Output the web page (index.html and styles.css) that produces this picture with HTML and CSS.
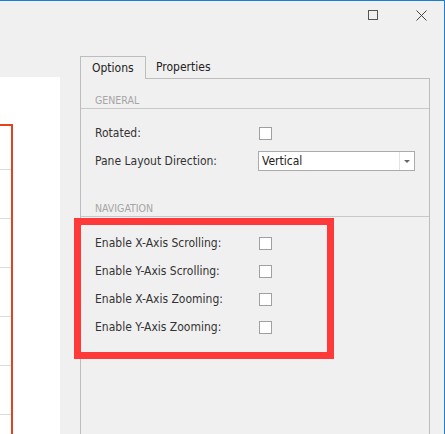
FILE: index.html
```html
<!DOCTYPE html>
<html>
<head>
<meta charset="utf-8">
<link rel="stylesheet" href="styles.css">
</head>
<body>
<div class="window">
  <div class="titlebar">
    <span class="ctl-max"></span>
    <svg class="ctl-close" width="11" height="11" viewBox="0 0 11 11"><path d="M0.5 0.5 L10.5 10.5 M10.5 0.5 L0.5 10.5" stroke="#444" stroke-width="1" fill="none"/></svg>
  </div>
  <div class="main">
    <div class="canvas">
      <div class="frame">
        <div class="cell first"></div>
        <div class="cell"></div>
        <div class="cell"></div>
        <div class="cell"></div>
        <div class="cell"></div>
        <div class="cell"></div>
      </div>
    </div>
    <div class="tabs">
      <div class="tab-strip">
        <div class="tab active">Options</div>
        <div class="tab">Properties</div>
      </div>
      <div class="tab-panel">
        <div class="group-head">General</div>
        <div class="group-body first-group">
          <div class="row"><span class="label">Rotated:</span><span class="check"></span></div>
          <div class="row"><span class="label">Pane Layout Direction:</span>
            <div class="combo"><span class="combo-text">Vertical</span><span class="combo-btn"><span class="arrow"></span></span></div>
          </div>
        </div>
        <div class="group-head">Navigation</div>
        <div class="group-body second-group">
          <div class="row"><span class="label">Enable X-Axis Scrolling:</span><span class="check"></span></div>
          <div class="row"><span class="label">Enable Y-Axis Scrolling:</span><span class="check"></span></div>
          <div class="row"><span class="label">Enable X-Axis Zooming:</span><span class="check"></span></div>
          <div class="row"><span class="label">Enable Y-Axis Zooming:</span><span class="check"></span></div>
        </div>
      </div>
    </div>
  </div>
  <div class="highlight"></div>
</div>
</body>
</html>
```
FILE: styles.css
```css
* { box-sizing: border-box; }
html, body { margin: 0; padding: 0; }
body {
  font-family: "DejaVu Sans Condensed", "Liberation Sans", Arial, sans-serif;
  font-size: 12px;
  color: #333;
  background: #f0f0f0;
}
.window {
  position: relative;
  width: 445px;
  height: 434px;
  background: #f0f0f0;
  border-top: 1px solid #1a7fd4;
  border-right: 1px solid #1a7fd4;
  display: flex;
  flex-direction: column;
  overflow: hidden;
}
.titlebar {
  height: 55px;
  flex-shrink: 0;
  display: flex;
  justify-content: flex-end;
  align-items: flex-start;
  padding-top: 9px;
  padding-right: 17px;
  gap: 38px;
}
.ctl-max {
  display: block;
  width: 10px;
  height: 10px;
  border: 1px solid #555;
}
.ctl-close { display: block; }
.main {
  flex: 1;
  display: flex;
  min-height: 0;
}
.canvas {
  width: 60px;
  flex-shrink: 0;
  margin-top: 21px;
  background: #fff;
  padding-top: 47px;
}
.frame {
  width: 13px;
  border-top: 2px solid #e2431e;
  border-right: 2px solid #e2431e;
  height: 400px;
}
.cell {
  height: 49px;
  border-bottom: 1px solid #dcdcdc;
}
.cell.first { height: 44px; }
.tabs {
  margin-left: 20px;
  width: 350px;
  display: flex;
  flex-direction: column;
}
.tab-strip {
  height: 22px;
  display: flex;
  flex-shrink: 0;
}
.tab {
  height: 22px;
  line-height: 22px;
  padding-left: 10px;
  font-size: 12px;
  color: #222;
}
.tab.active {
  position: relative;
  z-index: 1;
  width: 66px;
  height: 23px;
  margin-bottom: -1px;
  padding-left: 11px;
  border: 1px solid #bdbdbd;
  border-bottom: none;
  background: #f0f0f0;
  line-height: 22px;
}
.tab-panel {
  flex: 1;
  border: 1px solid #bdbdbd;
  border-bottom: none;
}
.group-head {
  height: 30px;
  padding-top: 15px;
  padding-left: 14px;
  line-height: 12px;
  font-size: 10.5px;
  text-transform: uppercase;
  color: #a5a5a5;
  border-bottom: 1px solid #c8c8c8;
}
.group-body.first-group { padding: 10px 0 12px; }
.group-body.second-group { padding: 12px 0 0; }
.row {
  height: 28px;
  display: flex;
  align-items: center;
  padding-left: 14px;
}
.label {
  width: 164px;
  flex-shrink: 0;
  font-size: 12px;
  color: #333;
}
.check {
  display: block;
  width: 13px;
  height: 13px;
  border: 1px solid #a0a0a0;
  background: #fff;
}
.combo {
  margin-left: -1px;
  width: 157px;
  height: 20px;
  border: 1px solid #ababab;
  background: #fff;
  display: flex;
  align-items: center;
}
.combo-text {
  flex: 1;
  padding-left: 3px;
  font-size: 12px;
  color: #222;
}
.combo-btn {
  width: 15px;
  height: 18px;
  border-left: 1px solid #e3e3e3;
  display: flex;
  align-items: center;
  justify-content: center;
}
.arrow {
  width: 0;
  height: 0;
  border-left: 3px solid transparent;
  border-right: 3px solid transparent;
  border-top: 3px solid #666;
}
.highlight {
  position: absolute;
  left: 74px;
  top: 217px;
  width: 260px;
  height: 141px;
  border: 7px solid #ff3939;
}
```
